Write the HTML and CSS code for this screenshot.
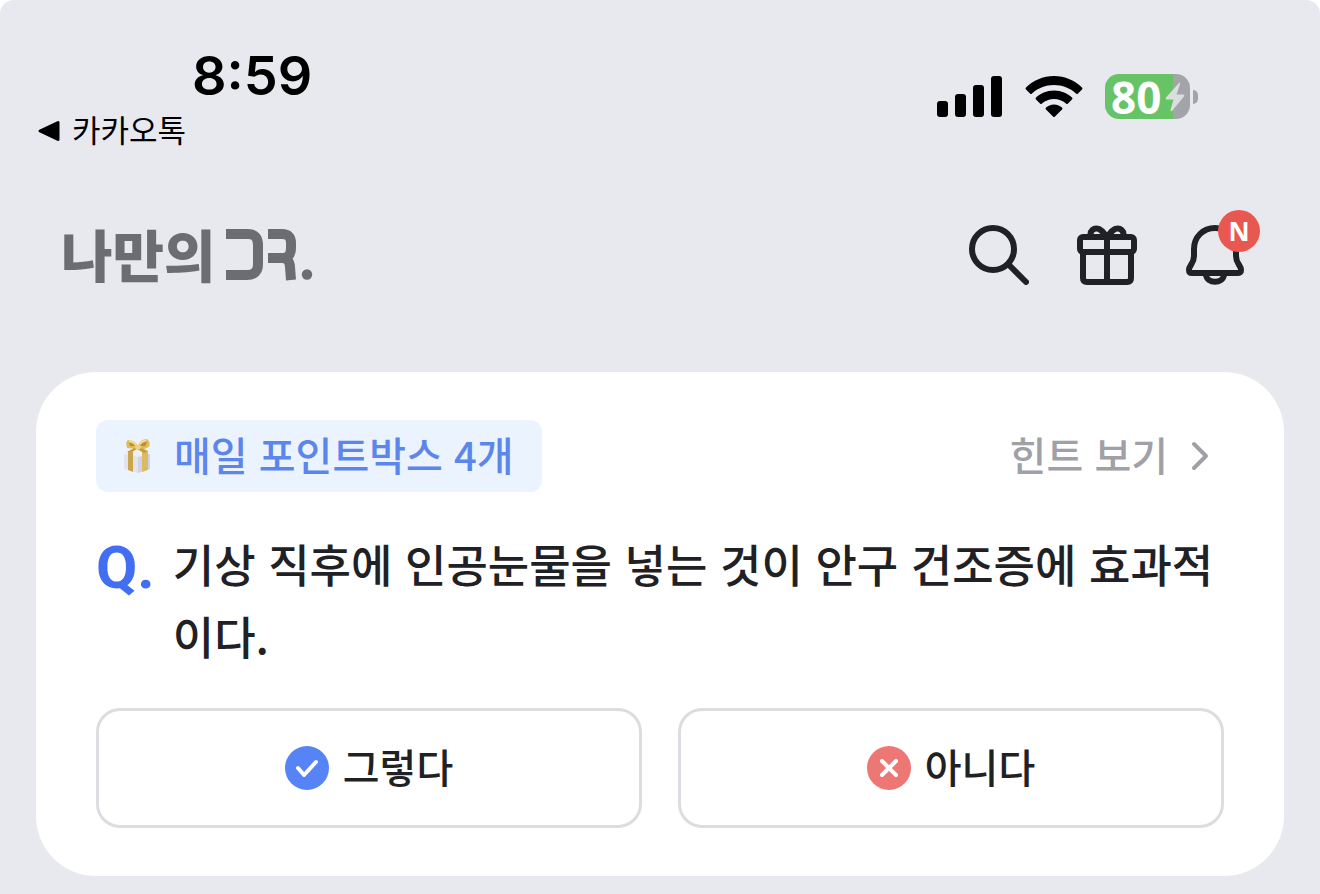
FILE: index.html
```html
<!DOCTYPE html>
<html lang="ko">
<head>
  <meta charset="UTF-8">
  <meta name="viewport" content="width=device-width, initial-scale=1">
  <title>나만의DR.</title>
  <link rel="stylesheet" href="styles.css">
</head>
<body>
  <div class="screen">

    <div class="status-bar">
      <div class="status-left">
        <time class="clock">8:59</time>
        <a class="back-app" href="#">
          <svg width="22" height="22" viewBox="0 0 22 22" aria-hidden="true">
            <path d="M2 11 L20 2.500 V19.500 Z" fill="#000" stroke="#000" stroke-width="3" stroke-linejoin="round"/>
          </svg>
          <span class="label">카카오톡</span>
        </a>
      </div>
      <div class="status-right">
        <svg width="66" height="42" viewBox="0 0 66 42" aria-hidden="true">
          <rect x="0" y="25" width="11" height="16" rx="3"/>
          <rect x="18" y="18" width="11" height="23" rx="3"/>
          <rect x="36" y="9" width="11" height="32" rx="3"/>
          <rect x="54" y="0" width="11" height="41" rx="3"/>
        </svg>
        <svg width="58" height="42" viewBox="0 0 58 42" aria-hidden="true">
          <path d="M29 0 C40 0 50 4.500 57 11.500 Q58 12.500 57 13.500 L53 17.500 Q52 18.500 51 17.500 C45 12 37.500 9 29 9 C20.500 9 13 12 7 17.500 Q6 18.500 5 17.500 L1 13.500 Q0 12.500 1 11.500 C8 4.500 18 0 29 0 Z"/>
          <path d="M29 14.500 C36.500 14.500 42.500 17.500 47 21.500 Q48 22.500 47 23.500 L43 27.500 Q42 28.500 41 27.500 C37.500 24.500 33.500 23 29 23 C24.500 23 20.500 24.500 17 27.500 Q16 28.500 15 27.500 L11 23.500 Q10 22.500 11 21.500 C15.500 17.500 21.500 14.500 29 14.500 Z"/>
          <path d="M29 28.500 C32.500 28.500 35 30 37 31.500 Q38 32.500 37 33.500 L30 40.500 Q29 41.500 28 40.500 L21 33.500 Q20 32.500 21 31.500 C23 30 25.500 28.500 29 28.500 Z"/>
        </svg>
        <div class="battery">
          <div class="battery-body">
            <span>80</span>
            <svg width="20" height="30" viewBox="0 0 20 30" aria-hidden="true">
              <path d="M14 1 L1 15.500 Q0 17.500 2 17.500 H8.500 L5.500 28 Q5.500 30 7 29 L19 14.500 Q20 12.500 18 12.500 H11.500 L15 2 Q15.500 0 14 1 Z" fill="#dcdddf"/>
            </svg>
          </div>
          <div class="battery-tip"></div>
        </div>
      </div>
    </div>

    <header class="header">
      <a class="logo" href="#">
        <span class="label">나만의</span>
        <svg width="90" height="56" viewBox="0 0 90 56" aria-hidden="true">
          <path d="M2 7 H24 Q34 7 34 18 V37 Q34 48 23 48 H2" fill="none" stroke="#6b6d73" stroke-width="10"/>
          <path d="M44 7 H58 Q67 7 67 16 V21 Q67 31 58 31 H44 M58 31 Q65.500 31 66 40 L67 53" fill="none" stroke="#6b6d73" stroke-width="10"/>
          <circle cx="83" cy="47.500" r="5.200" fill="#6b6d73"/>
        </svg>
      </a>
      <nav class="actions">
        <button type="button" aria-label="검색">
          <svg width="60" height="60" viewBox="0 0 60 60">
            <circle cx="24" cy="24" r="21"/>
            <path d="M39 39 L57 57"/>
          </svg>
        </button>
        <button type="button" aria-label="선물">
          <svg width="60" height="60" viewBox="0 0 60 60">
            <rect x="3" y="12" width="54" height="15" rx="3"/>
            <path d="M6 27 V53 Q6 57 10 57 H50 Q54 57 54 53 V27 M30 12 V57"/>
            <path d="M14 12 C12 6 17 2 22 4 C26 6 27 9 30 12 C33 9 34 6 38 4 C43 2 48 6 46 12"/>
          </svg>
        </button>
        <button type="button" aria-label="알림">
          <svg width="60" height="60" viewBox="0 0 60 60">
            <path d="M30 3 C18 3 9 12 9 24 V31 C9 39 4 40 4 45 Q4 48 7 48 H52 Q56 48 56 45 C56 40 51 39 51 31 V24 C51 12 42 3 30 3 Z"/>
            <path d="M21 50 C22 59 38 59 39 50"/>
          </svg>
          <span class="badge">N</span>
        </button>
      </nav>
    </header>

    <main class="card">
      <div class="card-top">
        <div class="chip">
          <svg width="28" height="36" viewBox="0 0 28 36" aria-hidden="true">
            <path d="M1 13 L15 16 V35 L1 31 Z" fill="#e3e2ee"/>
            <path d="M15 16 L27 13 V31 L15 35 Z" fill="#d3d1e2"/>
            <path d="M1 12 L13 9 L27 12 V16 L15 19 L1 16 Z" fill="#efeff6"/>
            <path d="M5 13 L10 14 V34 L5 32 Z" fill="#c9a54e"/>
            <path d="M19 14 L25 13 V32 L19 34 Z" fill="#d9bb65"/>
            <path d="M14 11 L4 10 Q2 4 5 2 Q12 2 15 8 Q17 1 24 1 Q28 4 26 9 Q21 12 14 11 Z" fill="#dfbd5f"/>
            <path d="M13 9 L4 14 L9 14 L14 11 L21 15 L25 13 L16 9 Z" fill="#c99b3b"/>
            <path d="M6 5 Q10 5 12 8 L7 8 Z M17 8 Q19 4 24 4 L22 8 Z" fill="#b98c32"/>
            <path d="M6 3 Q10 3 13 7 M17 6 Q19 3 23 2" fill="none" stroke="#f5df98" stroke-width="1.500"/>
            <ellipse cx="15" cy="9" rx="3" ry="2.500" fill="#efd37f"/>
          </svg>
          <span class="label">매일 포인트박스 4개</span>
        </div>
        <a class="hint" href="#">
          <span class="label">힌트 보기</span>
          <svg width="18" height="30" viewBox="0 0 18 30" aria-hidden="true">
            <path d="M3 3 L15 15 L3 27" fill="none" stroke="#a0a1a7" stroke-width="4" stroke-linecap="round" stroke-linejoin="round"/>
          </svg>
        </a>
      </div>

      <div class="question">
        <span class="q-mark">Q.</span>
        <p>기상 직후에 인공눈물을 넣는 것이 안구 건조증에 효과적이다.</p>
      </div>

      <div class="answers">
        <button type="button">
          <svg width="44" height="44" viewBox="0 0 44 44" aria-hidden="true">
            <circle cx="22" cy="22" r="22" fill="#5684f6"/>
            <path d="M13 22 L19 29 L31 16" fill="none" stroke="#fff" stroke-width="4" stroke-linecap="round" stroke-linejoin="round"/>
          </svg>
          <span class="label">그렇다</span>
        </button>
        <button type="button">
          <svg width="44" height="44" viewBox="0 0 44 44" aria-hidden="true">
            <circle cx="22" cy="22" r="22" fill="#ec7774"/>
            <path d="M15 15 L29 29 M29 15 L15 29" fill="none" stroke="#fff" stroke-width="4" stroke-linecap="round"/>
          </svg>
          <span class="label">아니다</span>
        </button>
      </div>
    </main>

  </div>
</body>
</html>
```
FILE: styles.css
```css
* {
  box-sizing: border-box;
}
body {
  margin: 0;
  background: #fff;
  color: #1f2125;
  font-family: "Noto Sans CJK KR", sans-serif;
  font-weight: 500;
}
a {
  color: inherit;
  text-decoration: none;
}
button {
  padding: 0;
  border: none;
  background: none;
  color: inherit;
  font: inherit;
  cursor: pointer;
}
svg {
  display: block;
  flex: none;
}
.screen {
  min-height: 100vh;
  padding: 44px 36px 16px;
  background: #e8e9ee;
  border-radius: 14px 14px 0 0;
}
/* hangul sits low in its line box, lift it next to icons */
.label {
  padding-bottom: 4px;
}

/* status bar */
.status-bar {
  display: flex;
  justify-content: space-between;
  align-items: flex-start;
  color: #000;
}
.clock {
  display: block;
  margin-left: 156px;
  font: 600 54px/64px Inter, sans-serif;
}
.back-app {
  display: flex;
  align-items: center;
  gap: 12px;
  height: 46px;
  padding-left: 2px;
  font-size: 31px;
  font-weight: 400;
  line-height: 42px;
}
.status-right {
  display: flex;
  align-items: center;
  gap: 22px;
  padding: 30px 86px 0 0;
}
.battery {
  display: flex;
  align-items: center;
  gap: 3px;
}
.battery-body {
  display: flex;
  align-items: center;
  width: 85px;
  height: 45px;
  padding-left: 6px;
  border-radius: 14px;
  background: linear-gradient(to right, #66c466 80%, #a3a4a8 80%);
  color: #fff;
  font: 700 44px/44px "Open Sans", sans-serif;
}
.battery-body svg {
  margin-left: 4px;
}
.battery-tip {
  width: 5px;
  height: 14px;
  border-radius: 0 7px 7px 0;
  background: #a3a4a8;
}

/* header */
.header {
  display: flex;
  justify-content: space-between;
  align-items: center;
  height: 90px;
  margin-top: 56px;
  padding: 0 39px 0 25px;
}
.logo {
  display: flex;
  align-items: center;
  gap: 8px;
  color: #6b6d73;
  font-size: 56px;
  font-weight: 900;
  line-height: 60px;
}
.actions {
  display: flex;
  gap: 48px;
}
.actions button {
  position: relative;
}
.actions svg {
  fill: none;
  stroke: #1f2125;
  stroke-width: 6;
  stroke-linecap: round;
  stroke-linejoin: round;
}
.badge {
  position: absolute;
  top: -15px;
  right: -15px;
  width: 42px;
  height: 42px;
  border-radius: 50%;
  background: #e95850;
  color: #fff;
  font: 700 26px/42px "Noto Sans", sans-serif;
}

/* quiz card */
.card {
  margin-top: 72px;
  padding: 48px 60px;
  border-radius: 60px;
  background: #fff;
}
.card-top {
  display: flex;
  justify-content: space-between;
  align-items: center;
}
.chip {
  display: flex;
  align-items: center;
  gap: 23px;
  height: 72px;
  padding: 0 28px 0 27px;
  border-radius: 12px;
  background: #ebf4fe;
  color: #5c86ec;
  font-size: 40px;
}
.hint {
  display: flex;
  align-items: center;
  gap: 23px;
  padding-right: 15px;
  color: #a0a1a7;
  font-size: 40px;
}
.question {
  display: flex;
  gap: 18px;
  margin: 36px 0;
  font-size: 45px;
  line-height: 72px;
}
.question p {
  flex: 1;
  margin: 0;
}
.q-mark {
  color: #426ff2;
  font: 700 60px/80px Roboto, sans-serif;
}
.answers {
  display: grid;
  grid-template-columns: 1fr 1fr;
  gap: 36px;
}
.answers button {
  display: flex;
  justify-content: center;
  align-items: center;
  gap: 14px;
  height: 120px;
  border: 3px solid #dcdde0;
  border-radius: 24px;
  font-size: 40px;
}
```
